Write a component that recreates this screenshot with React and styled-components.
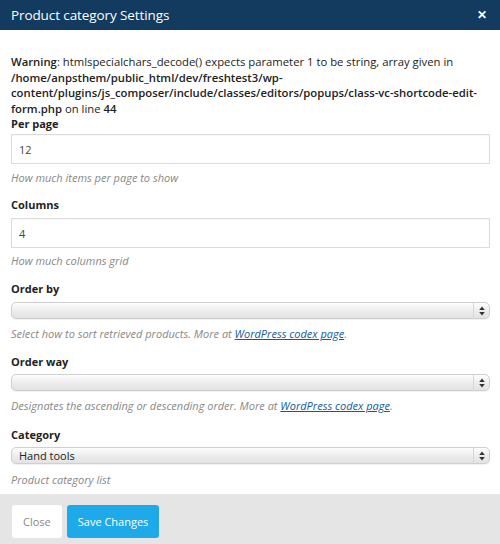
import styled, { createGlobalStyle } from "styled-components";

const GlobalStyle = createGlobalStyle`
  html, body {
    margin: 0;
    padding: 0;
    background: #fff;
  }
  body {
    font-family: "Open Sans", "Liberation Sans", sans-serif;
    color: #333;
  }
`;

const Modal = styled.div`
  width: 500px;
  height: 544px;
  display: flex;
  flex-direction: column;
  background: #fff;
  overflow: hidden;
`;

const Header = styled.div`
  height: 30px;
  flex-shrink: 0;
  background: #133a5f;
  display: flex;
  align-items: center;
  justify-content: space-between;
  padding: 0 13px 0 11px;
  box-sizing: border-box;
`;

const Title = styled.h3`
  margin: 0;
  font-size: 13.5px;
  font-weight: 400;
  color: #fff;
  line-height: 30px;
  letter-spacing: -0.1px;
`;

const CloseX = styled.span`
  color: #fff;
  font-size: 12px;
  font-weight: 700;
  line-height: 1;
  cursor: pointer;
`;

const Body = styled.div`
  flex: 1;
  min-height: 0;
  padding: 24px 10px 0 11px;
`;

const Warning = styled.div`
  font-size: 11.3px;
  line-height: 15.5px;
  color: #222;

  b {
    font-weight: 600;
  }
`;

const Field = styled.div`
  margin-bottom: ${(p) => p.gap || 12}px;

  &:last-child {
    margin-bottom: 0;
  }
`;

const Label = styled.div`
  font-size: 11px;
  font-weight: 700;
  line-height: 16px;
  color: #222;
  margin-bottom: ${(p) => p.space || 4}px;
`;

const TextInput = styled.div`
  height: 30px;
  width: 479px;
  box-sizing: border-box;
  border: 1px solid #dcdcdc;
  box-shadow: inset 0 1px 2px rgba(0, 0, 0, 0.04);
  padding: 0 7px;
  display: flex;
  align-items: center;
  font-size: 11px;
  color: #444;
`;

const SelectBox = styled.div`
  height: 17px;
  width: 479px;
  box-sizing: border-box;
  border: 1px solid #cfcfcf;
  border-radius: 5px;
  background: linear-gradient(#fdfdfd, #ececec 55%, #e3e3e3);
  display: flex;
  align-items: center;
  font-size: 11px;
  color: #222;
  box-shadow: 0 1px 1px rgba(0, 0, 0, 0.06);
`;

const SelectValue = styled.span`
  flex: 1;
  padding-left: 7px;
  line-height: 15px;
`;

const ArrowCell = styled.span`
  width: 15px;
  height: 100%;
  border-left: 1px solid #d6d6d6;
  display: flex;
  align-items: center;
  justify-content: center;
`;

const Help = styled.div`
  font-size: 11px;
  font-style: italic;
  color: #888;
  line-height: 16px;
  margin-top: ${(p) => p.top || 6}px;

  a {
    color: #0f5b9b;
    text-decoration: underline;
  }
`;

const Footer = styled.div`
  height: 50px;
  flex-shrink: 0;
  background: #e5e5e5;
  display: flex;
  align-items: flex-start;
  gap: 5px;
  padding: 11px 12px 0;
  box-sizing: border-box;
`;

const Button = styled.button`
  height: 33px;
  border: none;
  border-radius: 3px;
  font-family: "Open Sans", "Liberation Sans", sans-serif;
  font-size: 11px;
  padding: 0 11px;
  background: ${(p) => (p.primary ? "#1eaae9" : "#fff")};
  color: ${(p) => (p.primary ? "#fff" : "#888")};
  cursor: pointer;
`;

const Arrows = () => (
  <svg width="6" height="10" viewBox="0 0 6 10">
    <path d="M3 0.5 L5.8 4 L0.2 4 Z" fill="#333" />
    <path d="M3 9.5 L5.8 6 L0.2 6 Z" fill="#333" />
  </svg>
);

const Select = ({ value }) => (
  <SelectBox>
    <SelectValue>{value}</SelectValue>
    <ArrowCell>
      <Arrows />
    </ArrowCell>
  </SelectBox>
);

const Codex = () => (
  <>
    <a href="#">WordPress codex page</a>.
  </>
);

export default function App() {
  return (
    <>
      <GlobalStyle />
      <Modal>
        <Header>
          <Title>Product category Settings</Title>
          <CloseX>✕</CloseX>
        </Header>
        <Body>
          <Warning>
            <b>Warning</b>: htmlspecialchars_decode() expects parameter 1 to be string, array given in{" "}
            <b>/home/anpsthem/public_html/dev/freshtest3/wp-content/plugins/js_composer/include/classes/editors/popups/class-vc-shortcode-edit-form.php</b>{" "}
            on line <b>44</b>
          </Warning>
          <Field gap={11}>
            <Label space={2}>Per page</Label>
            <TextInput>12</TextInput>
            <Help>How much items per page to show</Help>
          </Field>
          <Field>
            <Label space={5}>Columns</Label>
            <TextInput>4</TextInput>
            <Help top={5}>How much columns grid</Help>
          </Field>
          <Field>
            <Label space={5}>Order by</Label>
            <Select value="" />
            <Help top={7}>
              Select how to sort retrieved products. More at <Codex />
            </Help>
          </Field>
          <Field gap={13}>
            <Label>Order way</Label>
            <Select value="" />
            <Help top={7}>
              Designates the ascending or descending order. More at <Codex />
            </Help>
          </Field>
          <Field>
            <Label>Category</Label>
            <Select value="Hand tools" />
            <Help top={8}>Product category list</Help>
          </Field>
        </Body>
        <Footer>
          <Button>Close</Button>
          <Button primary>Save Changes</Button>
        </Footer>
      </Modal>
    </>
  );
}
